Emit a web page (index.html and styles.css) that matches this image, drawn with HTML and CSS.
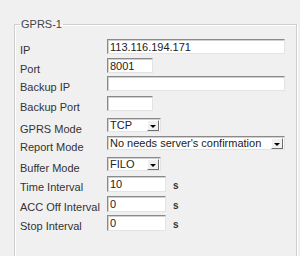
FILE: index.html
```html
<!DOCTYPE html>
<html lang="en">
<head>
    <meta charset="UTF-8">
    <title>GPRS-1</title>
    <link rel="stylesheet" href="styles.css">
</head>
<body>
    <fieldset class="group">
        <legend>GPRS-1</legend>
        <div class="form">
            <label>IP</label>
            <div class="field"><input class="text wide" type="text" value="113.116.194.171"></div>

            <label>Port</label>
            <div class="field"><input class="text short" type="text" value="8001"></div>

            <label>Backup IP</label>
            <div class="field"><input class="text wide" type="text" value=""></div>

            <label>Backup Port</label>
            <div class="field"><input class="text short" type="text" value=""></div>

            <label>GPRS Mode</label>
            <div class="field"><div class="combo small"><span class="value">TCP</span><span class="arrow"></span></div></div>

            <label>Report Mode</label>
            <div class="field"><div class="combo wide"><span class="value">No needs server's confirmation</span><span class="arrow"></span></div></div>

            <label>Buffer Mode</label>
            <div class="field"><div class="combo small"><span class="value">FILO</span><span class="arrow"></span></div></div>

            <label>Time Interval</label>
            <div class="field"><input class="text num" type="text" value="10"><span class="unit">s</span></div>

            <label>ACC Off Interval</label>
            <div class="field"><input class="text num" type="text" value="0"><span class="unit">s</span></div>

            <label>Stop Interval</label>
            <div class="field"><input class="text num" type="text" value="0"><span class="unit">s</span></div>
        </div>
    </fieldset>
</body>
</html>
```

FILE: styles.css
```css
html, body { margin: 0; padding: 0; }
body { height: 256px; overflow: hidden; background: #f0f0f0; font-family: "Liberation Sans", Arial, sans-serif; font-size: 11px; color: #333; }
.group { margin: 18px 0 0 14px; width: 283px; height: 250px; box-sizing: border-box; padding: 4px 0 0 5px; border: 1px solid #cfcfcf; box-shadow: inset 1px 1px 0 #fff, 1px 1px 0 #fff; }
.group legend { padding: 0 1px; color: #444; }
.form { display: grid; grid-template-columns: 87px 1fr; grid-template-rows: 19px 18px 20px 22px 18px 21px 19px 20px 19px 20px; margin-top: 5px; }
.form label { padding-top: 5px; white-space: nowrap; }
.field { display: flex; align-items: flex-start; }
.text { box-sizing: border-box; height: 15px; margin: 0; padding: 0 2px; font: inherit; color: #222; background: #fff;
    border: 1px solid #e3e3e3; border-top-color: #8a8a8a; border-left-color: #8a8a8a; box-shadow: inset 1px 1px 0 #d0d0d0; outline: none; }
.text.wide { width: 178px; }
.text.short { width: 46px; }
.text.num { width: 59px; height: 16px; }
.unit { margin-left: 7px; padding-top: 4px; font-size: 10px; font-weight: bold; color: #333; }
.combo { box-sizing: border-box; height: 14px; display: flex; background: #fff; border: 1px solid #8a8a8a; border-right-color: #e3e3e3; border-bottom-color: #e3e3e3; box-shadow: inset 1px 1px 0 #d0d0d0; }
.combo.small { width: 54px; }
.combo.wide { width: 178px; }
.combo .value { flex: 1; padding: 0 2px; line-height: 12px; color: #222; white-space: nowrap; overflow: hidden; }
.combo .arrow { width: 10px; margin: 1px 1px 0 0; background: #f0f0f0; border-right: 1px solid #6e6e6e; border-bottom: 1px solid #6e6e6e; border-top: 1px solid #fff; border-left: 1px solid #fff; position: relative; }
.combo .arrow::after { content: ""; position: absolute; left: 2px; top: 4px; border-left: 3px solid transparent; border-right: 3px solid transparent; border-top: 3px solid #000; }
```
